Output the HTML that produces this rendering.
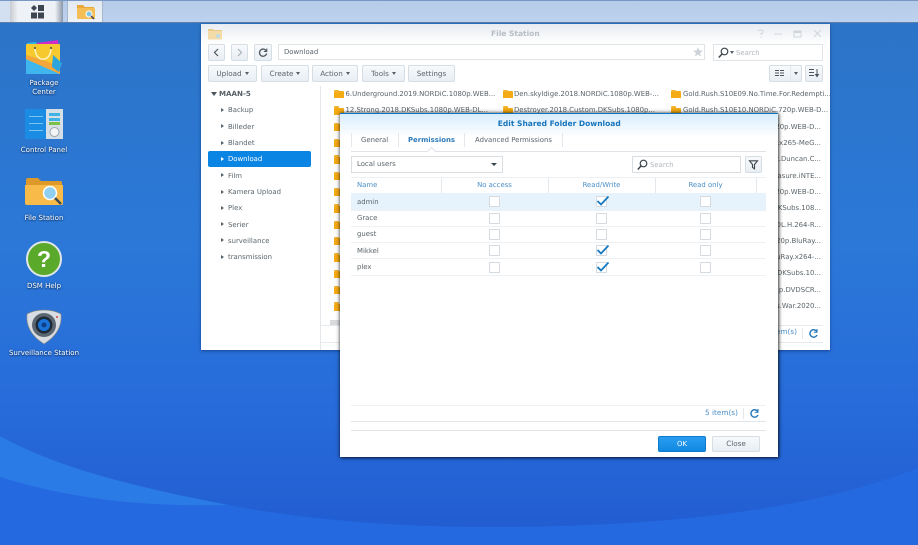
<!DOCTYPE html>
<html><head><meta charset="utf-8">
<style>
html,body{margin:0;padding:0;width:918px;height:545px;overflow:hidden}
html{background:#2a72d2}
#p{position:absolute;left:0;top:0;width:918px;height:545px;overflow:hidden;font-family:"DejaVu Sans","Liberation Sans",sans-serif;font-size:6.9px;color:#50595f;text-rendering:geometricPrecision;filter:blur(.3px)}
#p div,#p span{position:absolute;white-space:nowrap;box-sizing:border-box}
svg{position:absolute;overflow:visible}
.lbl{color:#fff;text-align:center;width:100px;line-height:9px;text-shadow:0 1px 1px #123a70,0 0 2px #123a70;font-size:7px}
.btn{height:17px;border:1px solid #d5dde5;border-radius:2px;background:linear-gradient(#f7f9fb,#e8eef4);color:#5a646c;text-align:center;line-height:15px;font-size:7.2px}
#p .car,.car{display:inline-block;position:static;width:0;height:0;border:2px solid transparent;border-top:3px solid #56616a;border-bottom:0;margin-left:3px;vertical-align:1px}
.tree{left:228px;line-height:12px;color:#5b656c}
.tri{width:0;height:0;border-left:3px solid #59636b;border-top:2.5px solid transparent;border-bottom:2.5px solid transparent;left:221px}
.f{line-height:12px;color:#596269}
.fi{width:10px;height:7px;background:#f5ab13;border-radius:1px 1px 0 0}
.fi:before{content:"";position:absolute;left:0;top:-1.5px;width:5px;height:2px;background:#f2b32c;border-radius:1px 1px 0 0}
.r{right:97px;line-height:12px;color:#5b646a}
.cb{width:11px;height:11px;border:1px solid #d4dadf;background:#fff;border-radius:1px}
.rw{left:351px;width:415px;height:1px;background:#eef1f3}
.n{left:357px;line-height:12px;color:#5b646a}
.th{line-height:12px;color:#4a8ec6;text-align:center}
.sep{width:1px;background:#e4e8ec}
</style></head>
<body><div id="p">
<!-- wallpaper -->
<svg width="918" height="545" style="left:0;top:0;overflow:hidden" viewBox="0 0 918 545">
<defs>
<linearGradient id="w" x1="0" y1="0" x2="0" y2="1"><stop offset="0" stop-color="#2c74c6"/><stop offset=".45" stop-color="#2b78d8"/><stop offset=".75" stop-color="#276bda"/><stop offset=".97" stop-color="#225dd2"/></linearGradient>
</defs>
<rect width="918" height="545" fill="url(#w)"/>
<path d="M0 436C60 470 150 490 228 505S400 527 486 527C640 527 800 515 918 468V545H0Z" fill="#2469e0"/>
<path d="M0 436C60 470 150 490 228 505 170 506 90 505 0 477Z" fill="#2b7be6"/>
</svg>
<!-- taskbar -->
<div style="left:0;top:0;width:918px;height:23px;background:linear-gradient(#b5cbe8,#bcd2ee);border-top:1px solid #7a96c4;border-bottom:1px solid #5f7ea8"></div>
<div style="left:0;top:1px;width:10px;height:21px;background:#d3e0f2"></div>
<div style="left:10px;top:1px;width:53px;height:21px;background:linear-gradient(90deg,#c8ccd2,#eef1f5 15%,#eef1f5 85%,#8a97a8);"></div>
<svg style="left:30px;top:5px" width="14" height="14"><path d="M4 0 7 3 4 6 1 3Z" fill="#3d4650"/><rect x="8" y="0" width="6" height="6" fill="#3d4650"/><rect x="1" y="7.500" width="6" height="6" fill="#3d4650"/><rect x="8" y="7.500" width="6" height="6" fill="#3d4650"/></svg>
<div style="left:67px;top:1px;width:36px;height:21px;background:linear-gradient(#e4eaf2,#eef2f8);border-left:1px solid #a8b8cc;border-right:1px solid #a8b8cc"></div>
<svg style="left:76px;top:4px" width="20" height="16"><path d="M1 1H7L9 3H18V14H1Z" fill="#e9a83a"/><rect x="1" y="4" width="18" height="11" rx="1" fill="#f5bd55"/><circle cx="13" cy="10" r="3" fill="#7ec6e8" stroke="#fff"/><path d="M15 12 18 15" stroke="#445" stroke-width="1.500"/></svg>
<!-- desktop icons -->
<svg style="left:26px;top:39px" width="36" height="36" viewBox="0 0 36 36">
<path d="M3 5 32 1 33 8H3Z" fill="#d02cc8"/><path d="M1 4 10 3 12 8H1Z" fill="#35b8e8"/>
<rect x="0" y="5" width="34" height="30" rx="1" fill="#f6c92f"/>
<path d="M0 20 34 35H0Z" fill="#3fb6ee"/><path d="M0 16 20 22 34 28V35L0 20Z" fill="#f3a63a"/>
<path d="M9 9C9 24 25 24 25 9" fill="none" stroke="#fff3c4" stroke-width="1.500"/>
<circle cx="9" cy="9" r="1" fill="#444"/><circle cx="25" cy="9" r="1" fill="#444"/>
<path d="M27 16 36 24 33 33 26 28Z" fill="#2ba5dc"/>
</svg>
<div class="lbl" style="left:-6px;top:78.500px">Package<br>Center</div>
<svg style="left:25px;top:109px" width="38" height="30" viewBox="0 0 38 30">
<rect width="38" height="30" fill="#1a8ce4"/><rect x="21" width="17" height="30" fill="#d6dfe6"/>
<rect x="4" y="7" width="14" height="1" fill="#7cc4f4"/><rect x="4" y="14" width="14" height="1" fill="#7cc4f4"/><rect x="4" y="21" width="14" height="1" fill="#7cc4f4"/>
<rect x="24" y="4" width="11" height="3" fill="#3fb2e6"/><rect x="24" y="9" width="11" height="3" fill="#3fb2e6"/><rect x="24" y="13" width="11" height="3" fill="#7cc04a"/>
<circle cx="29.500" cy="23" r="4.500" fill="#f2f4f6" stroke="#9aa5ae"/>
</svg>
<div class="lbl" style="left:-6px;top:146px">Control Panel</div>
<svg style="left:25px;top:177px" width="38" height="30" viewBox="0 0 38 30">
<path d="M1 3Q1 1 3 1H13L16 4H35Q37 4 37 6V12H1Z" fill="#dd9a2a"/>
<path d="M0 8H38V26Q38 28 36 28H2Q0 28 0 26Z" fill="#f8bb4a"/>
<circle cx="25" cy="16" r="6.500" fill="#8fd0f0" stroke="#fff" stroke-width="1.500"/>
<path d="M30 21 36 27" stroke="#3c4a52" stroke-width="2.500"/>
</svg>
<div class="lbl" style="left:-6px;top:213.500px">File Station</div>
<svg style="left:26px;top:241px" width="36" height="36" viewBox="0 0 36 36"><circle cx="18" cy="18" r="17" fill="#5aa92a" stroke="#dfe6e4" stroke-width="2"/><text x="18" y="26" text-anchor="middle" font-size="23" font-weight="700" font-family="Liberation Sans" fill="#fff">?</text></svg>
<div class="lbl" style="left:-6px;top:281.500px">DSM Help</div>
<svg style="left:26px;top:310px" width="36" height="34" viewBox="0 0 36 34"><path d="M18 0Q28 0 35 4 37 22 18 34-1 22 1 4 8 0 18 0Z" fill="#d8dde2" stroke="#7d858c" stroke-width=".7"/><circle cx="18" cy="15" r="12" fill="#5b6670"/><circle cx="18" cy="15" r="8.500" fill="#1c2a38"/><circle cx="18" cy="15" r="6" fill="#1a73d8"/><circle cx="18" cy="15" r="2.500" fill="#0e3f88"/><circle cx="31" cy="7" r="1" fill="#d44"/></svg>
<div class="lbl" style="left:-6px;top:349px">Surveillance Station</div>

<!-- File Station window -->
<div style="left:201px;top:24px;width:629px;height:326px;background:#fff;box-shadow:0 1px 3px rgba(0,30,80,.5)"></div>
<div style="left:201px;top:24px;width:629px;height:20px;background:linear-gradient(#e8ecf1,#fff)"></div>
<svg style="left:208px;top:28px" width="15" height="12"><path d="M0 1H5L6 2H14V11H0Z" fill="#e8c98a"/><rect y="3" width="14" height="8.500" fill="#f3dca8"/><circle cx="10" cy="8" r="2" fill="#bcd9e6"/></svg>
<div style="left:491px;top:28px;font-weight:700;font-size:7.5px;color:#b6bdc4;line-height:12px">File Station</div>
<svg style="left:755px;top:29px" width="70" height="10" fill="none" stroke="#d0d5da"><path d="M3 2Q4 1 6 1 8 1 8 3 8 4 6 5V6M6 8V9"/><path d="M19 5H27"/><rect x="39" y="2" width="7" height="6"/><path d="M39 3H46" stroke-width="2"/><path d="M59 1 66 8M66 1 59 8"/></svg>
<div class="btn" style="left:208px;top:44px;width:17px"></div>
<svg style="left:208px;top:44px" width="17" height="17" fill="none" stroke="#4c565e" stroke-width="1.200"><path d="M10 5 6.500 8.500 10 12"/></svg>
<div class="btn" style="left:231px;top:44px;width:17px"></div>
<svg style="left:231px;top:44px" width="17" height="17" fill="none" stroke="#a8b0b7" stroke-width="1.200"><path d="M7 5 10.500 8.500 7 12"/></svg>
<div class="btn" style="left:254px;top:44px;width:18px"></div>
<svg style="left:254px;top:44px" width="18" height="17" fill="none" stroke="#4c565e" stroke-width="1.300"><path d="M12.300 7A3.600 3.600 0 1 0 12.600 9.500"/><path d="M12.800 4.500V7.500H9.800" stroke-width="1"/></svg>
<div style="left:278px;top:44px;width:427px;height:16px;border:1px solid #dfe4e8;line-height:14px;padding-left:5px;color:#5a646b">Download</div>
<svg style="left:693px;top:47px" width="10" height="10"><path d="M5 0 6.300 3.400 10 3.600 7.100 5.900 8.100 9.500 5 7.500 1.900 9.500 2.900 5.900 0 3.600 3.700 3.400Z" fill="#cdd3d8"/></svg>
<div style="left:713px;top:44px;width:110px;height:17px;border:1px solid #dfe4e8"></div>
<svg style="left:718px;top:47px" width="12" height="11" fill="none" stroke="#3c454c" stroke-width="1.200"><circle cx="6.500" cy="4.500" r="3.300"/><path d="M4 7 .8 10.500" stroke-width="1.500"/></svg>
<span class="car" style="position:absolute;left:730px;top:51px;margin:0"></span>
<div style="left:736px;top:46.500px;color:#b0b7bd;line-height:12px">Search</div>
<div class="btn" style="left:208px;top:65px;width:49px">Upload<i class="car"></i></div>
<div class="btn" style="left:261px;top:65px;width:48px">Create<i class="car"></i></div>
<div class="btn" style="left:312px;top:65px;width:46px">Action<i class="car"></i></div>
<div class="btn" style="left:362px;top:65px;width:43px">Tools<i class="car"></i></div>
<div class="btn" style="left:408px;top:65px;width:47px">Settings</div>
<div class="btn" style="left:769px;top:65px;width:33px"></div>
<div class="sep" style="left:790px;top:66px;height:15px"></div>
<svg style="left:775px;top:70px" width="10" height="7" fill="#4c565e"><rect width="4" height="1"/><rect x="5" width="4" height="1"/><rect y="2.500" width="4" height="1"/><rect x="5" y="2.500" width="4" height="1"/><rect y="5" width="4" height="1"/><rect x="5" y="5" width="4" height="1"/></svg>
<span class="car" style="position:absolute;left:794px;top:72px;margin:0"></span>
<div class="btn" style="left:805px;top:65px;width:18px"></div>
<svg style="left:809px;top:69px" width="11" height="9" fill="#4c565e"><rect width="5" height="1"/><rect y="3" width="5" height="1"/><rect y="6" width="5" height="1"/><path d="M7.500 0H8.500V5H10.300L8 8.500 5.700 5H7.500Z"/></svg>

<!-- sidebar -->
<div style="left:320px;top:86px;width:1px;height:264px;background:#e4e8ec"></div>
<div style="left:211px;top:92px;width:0;height:0;border:3px solid transparent;border-top:4px solid #4a545c;border-bottom:0"></div>
<div style="left:219px;top:88px;font-weight:700;font-size:7.1px;color:#555e66;line-height:12px">MAAN-5</div>
<div style="left:208px;top:151px;width:103px;height:16px;background:#0b85e4;border-radius:2px"></div>
<div class="tri" style="top:107.500px"></div><div class="tree" style="top:104px">Backup</div>
<div class="tri" style="top:124px"></div><div class="tree" style="top:120.500px">Billeder</div>
<div class="tri" style="top:140.500px"></div><div class="tree" style="top:137px">Blandet</div>
<div class="tri" style="top:156.500px;border-left-color:#fff"></div><div class="tree" style="top:153px;color:#fff">Download</div>
<div class="tri" style="top:173px"></div><div class="tree" style="top:169.500px">Film</div>
<div class="tri" style="top:189.500px"></div><div class="tree" style="top:186px">Kamera Upload</div>
<div class="tri" style="top:205.500px"></div><div class="tree" style="top:202px">Plex</div>
<div class="tri" style="top:222px"></div><div class="tree" style="top:218.500px">Serier</div>
<div class="tri" style="top:238px"></div><div class="tree" style="top:234.500px">surveillance</div>
<div class="tri" style="top:254.500px"></div><div class="tree" style="top:251px">transmission</div>

<!-- file grid -->
<div class="fi" style="left:334px;top:91px"></div><div class="f" style="left:345.500px;top:88px">6.Underground.2019.NORDiC.1080p.WEB...</div>
<div class="fi" style="left:502.500px;top:91px"></div><div class="f" style="left:514px;top:88px">Den.skyldige.2018.NORDiC.1080p.WEB-...</div>
<div class="fi" style="left:671px;top:91px"></div><div class="f" style="left:683px;top:88px">Gold.Rush.S10E09.No.Time.For.Redempti...</div>
<div class="fi" style="left:334px;top:107.500px"></div><div class="f" style="left:345.500px;top:104px">12.Strong.2018.DKSubs.1080p.WEB-DL...</div>
<div class="fi" style="left:502.500px;top:107.500px"></div><div class="f" style="left:514px;top:104px">Destroyer.2018.Custom.DKSubs.1080p...</div>
<div class="fi" style="left:671px;top:107.500px"></div><div class="f" style="left:683px;top:104px">Gold.Rush.S10E10.NORDiC.720p.WEB-D...</div>
<div class="fi" style="left:334px;top:124px"></div><div class="fi" style="left:334px;top:140px"></div><div class="fi" style="left:334px;top:156.500px"></div><div class="fi" style="left:334px;top:173px"></div><div class="fi" style="left:334px;top:189px"></div><div class="fi" style="left:334px;top:205.500px"></div><div class="fi" style="left:334px;top:222px"></div><div class="fi" style="left:334px;top:238px"></div><div class="fi" style="left:334px;top:254.500px"></div><div class="fi" style="left:334px;top:271px"></div><div class="fi" style="left:334px;top:287px"></div><div class="fi" style="left:334px;top:303.500px"></div>
<div class="r" style="top:120.500px">720p.WEB-D...</div>
<div class="r" style="top:137px">iC.x265-MeG...</div>
<div class="r" style="top:153px">Cat.Duncan.C...</div>
<div class="r" style="top:169.500px">Treasure.iNTE...</div>
<div class="r" style="top:186px">720p.WEB-D...</div>
<div class="r" style="top:202px">.DKSubs.108...</div>
<div class="r" style="top:218.500px">-DL.H.264-R...</div>
<div class="r" style="top:234.500px">720p.BluRay...</div>
<div class="r" style="top:251px">BluRay.x264-...</div>
<div class="r" style="top:267px">.DKSubs.10...</div>
<div class="r" style="top:283.500px">p.DVDSCR...</div>
<div class="r" style="top:300px">ts.War.2020...</div>
<div style="left:330px;top:320px;width:20px;height:5px;background:#d9dcdf"></div>
<div style="left:321px;top:325px;width:502px;height:1px;background:#e8ebee"></div>
<div style="left:321px;top:342px;width:502px;height:1px;background:#e8ebee"></div>
<div style="right:121px;top:326px;color:#4a8ec6;line-height:12px;font-size:7.3px">5 item(s)</div>
<div class="sep" style="left:802px;top:328px;height:11px"></div>
<svg style="left:808px;top:328px" width="11" height="11" fill="none" stroke="#1f75b8" stroke-width="1.400"><path d="M8.800 3.500A3.700 3.700 0 1 0 9 7"/><path d="M9 1V4.200H5.800" stroke-width="1"/></svg>

<!-- Dialog -->
<div style="left:340px;top:113px;width:437.500px;height:344px;background:#fff;box-shadow:0 0 4px rgba(0,0,0,.7),1px 1px 3px rgba(0,0,0,.5)"></div>
<div style="left:340px;top:113px;width:437.500px;height:24px;background:linear-gradient(#d8edfd,#fff);border-top:1.500px solid #0e74c2"></div>
<div style="left:340px;top:118px;width:437.500px;text-align:center;font-weight:700;font-size:7.5px;color:#1674bc;line-height:12px;padding-left:1px">Edit Shared Folder Download</div>
<div class="sep" style="left:351px;top:133px;height:14px"></div>
<div class="sep" style="left:398px;top:133px;height:14px"></div>
<div class="sep" style="left:464px;top:133px;height:14px"></div>
<div class="sep" style="left:562px;top:133px;height:14px"></div>
<div style="left:361px;top:134px;line-height:12px;color:#5b646a">General</div>
<div style="left:408px;top:134px;line-height:12px;font-weight:700;color:#2d7ab8">Permissions</div>
<div style="left:475px;top:134px;line-height:12px;color:#5b646a">Advanced Permissions</div>
<div style="left:351px;top:151px;width:415px;height:1px;background:#e0e4e8"></div>
<svg style="left:427px;top:147px" width="9" height="5"><path d="M0 5 4.500 .5 9 5" fill="#fff" stroke="#dfe3e7"/></svg>
<div style="left:351px;top:156px;width:152px;height:17px;border:1px solid #d9dee2;line-height:15px;padding-left:5px;color:#5b646a">Local users</div>
<div style="left:491px;top:163px;width:0;height:0;border:3px solid transparent;border-top:3.500px solid #3c454c;border-bottom:0"></div>
<div style="left:632px;top:156px;width:109px;height:17px;border:1px solid #d9dee2"></div>
<svg style="left:637px;top:159px" width="12" height="11" fill="none" stroke="#3c454c" stroke-width="1.200"><circle cx="6.500" cy="4.500" r="3.300"/><path d="M4 7 .8 10.500" stroke-width="1.500"/></svg>
<div style="left:650px;top:159px;line-height:12px;color:#b0b7bd">Search</div>
<div class="btn" style="left:745px;top:156px;width:17px"></div>
<svg style="left:749px;top:160px" width="10" height="10" fill="none" stroke="#3c454c" stroke-width="1.100"><path d="M.5 .8H8.500L5.500 4.500V8.800L3.500 7.500V4.500Z"/></svg>

<div style="left:351px;top:177px;width:415px;height:1px;background:#eef1f3"></div>
<div class="sep" style="left:441px;top:178px;height:15px"></div>
<div class="sep" style="left:548px;top:178px;height:15px"></div>
<div class="sep" style="left:655px;top:178px;height:15px"></div>
<div class="sep" style="left:756px;top:178px;height:15px"></div>
<div class="th" style="left:357px;top:179px">Name</div>
<div class="th" style="left:441px;top:179px;width:107px">No access</div>
<div class="th" style="left:548px;top:179px;width:107px">Read/Write</div>
<div class="th" style="left:655px;top:179px;width:101px">Read only</div>
<div style="left:351px;top:193px;width:415px;height:17px;background:#e6f3fc"></div>
<div class="rw" style="top:226px"></div><div class="rw" style="top:242px"></div><div class="rw" style="top:258px"></div><div class="rw" style="top:275px"></div><div class="rw" style="top:210px"></div>
<div class="n" style="top:195.500px">admin</div>
<div class="n" style="top:212px">Grace</div>
<div class="n" style="top:228px">guest</div>
<div class="n" style="top:244.500px">Mikkel</div>
<div class="n" style="top:261px">plex</div>
<div class="cb" style="left:489px;top:196px"></div><div class="cb" style="left:596px;top:196px"></div><div class="cb" style="left:700px;top:196px"></div>
<div class="cb" style="left:489px;top:213px"></div><div class="cb" style="left:596px;top:213px"></div><div class="cb" style="left:700px;top:213px"></div>
<div class="cb" style="left:489px;top:229px"></div><div class="cb" style="left:596px;top:229px"></div><div class="cb" style="left:700px;top:229px"></div>
<div class="cb" style="left:489px;top:245px"></div><div class="cb" style="left:596px;top:245px"></div><div class="cb" style="left:700px;top:245px"></div>
<div class="cb" style="left:489px;top:262px"></div><div class="cb" style="left:596px;top:262px"></div><div class="cb" style="left:700px;top:262px"></div>
<svg style="left:596px;top:195px" width="14" height="12" fill="none" stroke="#1478c0" stroke-width="1.800"><path d="M1.500 6 5 9.500 12.500 1.500"/></svg>
<svg style="left:596px;top:244px" width="14" height="12" fill="none" stroke="#1478c0" stroke-width="1.800"><path d="M1.500 6 5 9.500 12.500 1.500"/></svg>
<svg style="left:596px;top:261px" width="14" height="12" fill="none" stroke="#1478c0" stroke-width="1.800"><path d="M1.500 6 5 9.500 12.500 1.500"/></svg>

<div class="rw" style="top:405px"></div>
<div style="left:705px;top:407px;line-height:12px;color:#4a8ec6;font-size:7.3px">5 item(s)</div>
<div class="sep" style="left:743px;top:408px;height:11px"></div>
<svg style="left:749px;top:408px" width="11" height="11" fill="none" stroke="#1f75b8" stroke-width="1.400"><path d="M8.800 3.500A3.700 3.700 0 1 0 9 7"/><path d="M9 1V4.200H5.800" stroke-width="1"/></svg>
<div style="left:351px;top:421px;width:415px;height:1px;background:#e2e6ea"></div>
<div style="left:351px;top:430px;width:415px;height:1px;background:#e2e6ea"></div>
<div style="left:658px;top:436px;width:48px;height:16px;border-radius:2px;background:linear-gradient(#2b9df0,#1088e0);border:1px solid #0d7bcc;color:#fff;text-align:center;line-height:14px">OK</div>
<div class="btn" style="left:712px;top:436px;width:48px;height:16px;line-height:14px">Close</div>
</div></body></html>
